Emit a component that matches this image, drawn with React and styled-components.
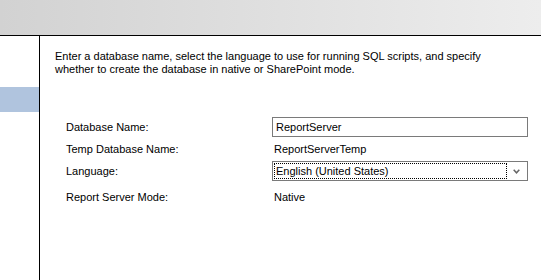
import styled, { createGlobalStyle } from 'styled-components';

const GlobalStyle = createGlobalStyle`
    html, body {
        margin: 0;
        padding: 0;
        background: #FFF;
    }
    body {
        font-family: "Liberation Sans", Arial, sans-serif;
        font-size: 11px;
        color: #000;
    }
`;

const Window = styled.div`
    width: 541px;
    height: 280px;
    display: flex;
    flex-direction: column;
    overflow: hidden;
`;
const Banner = styled.div`
    height: 35px;
    flex: none;
    background: linear-gradient(to right, #d2d2d2, #ededed);
    border-bottom: 1px solid #000;
`;
const Body = styled.div`
    flex: 1;
    display: flex;
`;
const Sidebar = styled.div`
    width: 40px;
    flex: none;
    border-right: 1px solid #000;
    padding-top: 51px;
    box-sizing: border-box;
`;
const NavItem = styled.div`
    width: 39px;
    height: 25px;
    background: ${(props) => (props.$active ? '#b0c4de' : 'transparent')};
`;
const Content = styled.div`
    flex: 1;
    padding: 14px 0 0 15px;
`;
const Intro = styled.p`
    margin: 0;
    line-height: 13px;
    width: 440px;
`;
const Form = styled.div`
    display: grid;
    grid-template-columns: 206px 256px;
    margin: 41px 0 0 11px;
`;
const Label = styled.div`
    height: 20px;
    display: flex;
    align-items: center;
    margin-top: ${(props) => props.$top || 0}px;
`;
const Value = styled(Label)`
    padding-left: 2px;
`;
const TextBox = styled.div`
    height: 20px;
    box-sizing: border-box;
    border: 1px solid #7a7a7a;
    display: flex;
    align-items: center;
    padding-left: 3px;
    margin-top: ${(props) => props.$top || 0}px;
`;
const Combo = styled.div`
    height: 20px;
    box-sizing: border-box;
    border: 1px solid #7a7a7a;
    display: flex;
    align-items: center;
    padding: 1px;
    margin-top: ${(props) => props.$top || 0}px;
`;
const ComboText = styled.div`
    flex: 1;
    height: 100%;
    box-sizing: border-box;
    border: 1px dotted #000;
    display: flex;
    align-items: center;
    padding-left: 1px;
`;
const Arrow = styled.div`
    width: 19px;
    display: flex;
    justify-content: center;
    align-items: center;
`;

const App = () => {
    return (
        <Window>
            <GlobalStyle />
            <Banner />
            <Body>
                <Sidebar>
                    <NavItem $active />
                </Sidebar>
                <Content>
                    <Intro>
                        Enter a database name, select the language to use for running SQL scripts, and specify
                        whether to create the database in native or SharePoint mode.
                    </Intro>
                    <Form>
                        <Label>Database Name:</Label>
                        <TextBox>ReportServer</TextBox>
                        <Label $top={2}>Temp Database Name:</Label>
                        <Value $top={2}>ReportServerTemp</Value>
                        <Label $top={2}>Language:</Label>
                        <Combo $top={2}>
                            <ComboText>English (United States)</ComboText>
                            <Arrow>
                                <svg width="7" height="5" viewBox="0 0 7 5">
                                    <path d="M0.7 0.8 L3.5 3.8 L6.3 0.8" fill="none" stroke="#666" strokeWidth="1.5" />
                                </svg>
                            </Arrow>
                        </Combo>
                        <Label $top={6}>Report Server Mode:</Label>
                        <Value $top={6}>Native</Value>
                    </Form>
                </Content>
            </Body>
        </Window>
    );
};
export default App;
